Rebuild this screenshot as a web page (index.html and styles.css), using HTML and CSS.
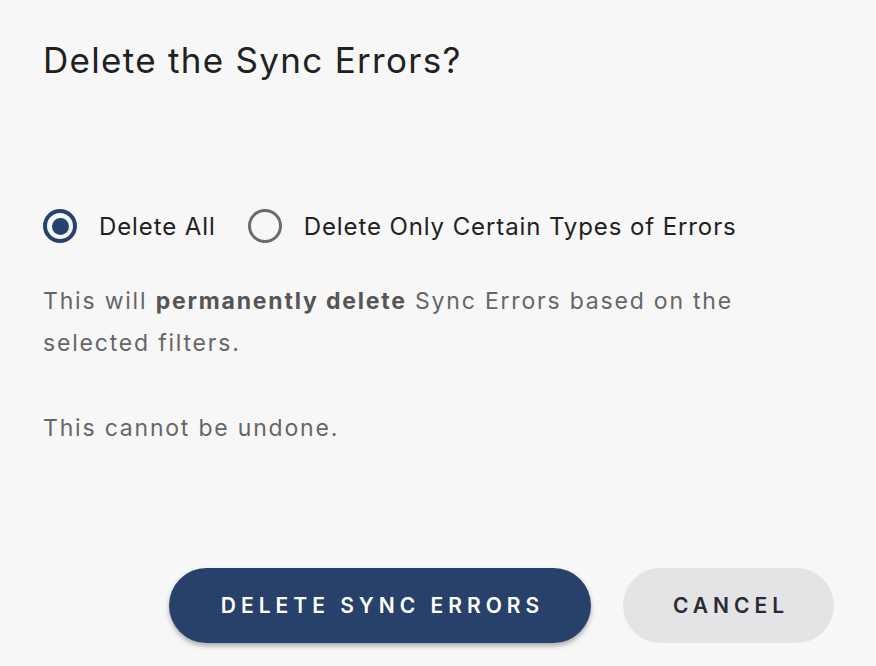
FILE: index.html
```html
<!DOCTYPE html>
<html>
<head>
<meta charset="utf-8">
<link rel="stylesheet" href="styles.css">
</head>
<body>
<div class="dialog">
  <h1 class="title">Delete the Sync Errors?</h1>
  <div class="radios">
    <label class="radio">
      <span class="circle checked"><span class="dot"></span></span>
      <span class="radio-label">Delete All</span>
    </label>
    <label class="radio">
      <span class="circle"></span>
      <span class="radio-label">Delete Only Certain Types of Errors</span>
    </label>
  </div>
  <p class="text"><span>This will</span> <strong>permanently delete</strong> <span>Sync Errors based on the</span> <span>selected filters.</span></p>
  <p class="text">This cannot be undone.</p>
  <div class="actions">
    <button class="btn primary">DELETE SYNC ERRORS</button>
    <button class="btn secondary">CANCEL</button>
  </div>
</div>
</body>
</html>
```
FILE: styles.css
```css
html, body {
  margin: 0;
  padding: 0;
  background: #f7f7f7;
}
body {
  font-family: "Inter", "Noto Sans", sans-serif;
  color: #212121;
}
.dialog {
  width: 876px;
  height: 666px;
  box-sizing: border-box;
  padding: 34px 42px 0 43px;
  display: flex;
  flex-direction: column;
}
.title {
  margin: 0;
  font-size: 35px;
  font-weight: 400;
  line-height: 52px;
  color: #212121;
  letter-spacing: 1.3px;
}
.radios {
  display: flex;
  align-items: center;
  gap: 32px;
  margin-top: 120px;
  height: 40px;
}
.radio {
  display: flex;
  align-items: center;
  gap: 22px;
}
.circle {
  width: 34px;
  height: 34px;
  box-sizing: border-box;
  border: 3.5px solid #6b6b6b;
  border-radius: 50%;
  display: flex;
  align-items: center;
  justify-content: center;
}
.circle.checked {
  border: 4px solid #27426d;
}
.dot {
  width: 17px;
  height: 17px;
  border-radius: 50%;
  background: #27426d;
}
.radio-label {
  font-size: 24px;
  color: #212121;
  letter-spacing: 0.9px;
}
.text {
  margin: 34px 0 0;
  font-size: 23px;
  line-height: 42px;
  color: #666666;
  max-width: 745px;
  letter-spacing: 1.8px;
}
.text + .text {
  margin-top: 43px;
}
.text strong {
  font-weight: 700;
  color: #555555;
}
.actions {
  margin-top: auto;
  margin-bottom: 23px;
  display: flex;
  justify-content: flex-end;
  gap: 32px;
}
.btn {
  height: 75px;
  border: none;
  border-radius: 38px;
  font-family: "Inter", "Noto Sans", sans-serif;
  font-size: 21px;
  font-weight: 600;
  letter-spacing: 5px;
  padding: 0 44px 0 49px;
}
.primary {
  width: 422px;
  background: #27416b;
  color: #ffffff;
  box-shadow: 0 3px 5px rgba(0, 0, 0, 0.3);
}
.secondary {
  width: 211px;
  background: #e4e4e6;
  color: #2a2a33;
}
```
